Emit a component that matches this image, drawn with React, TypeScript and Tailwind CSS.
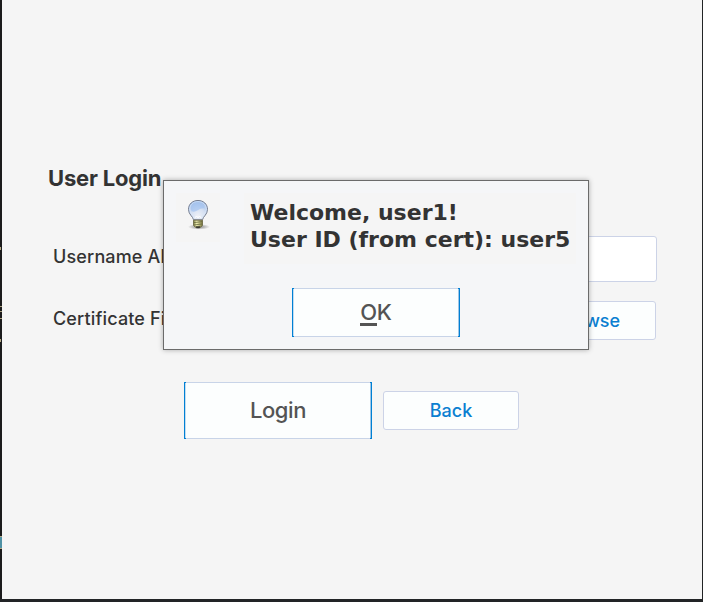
import React from 'react';

const inter = "font-['Inter','Liberation_Sans',sans-serif]";

function Bulb() {
  return (
    <svg width="26" height="32" viewBox="0 0 26 34" preserveAspectRatio="none" className="block">
      <defs>
        <radialGradient id="glass" cx="0.5" cy="0.8" r="0.85">
          <stop offset="0" stopColor="#eef1f8" />
          <stop offset="0.45" stopColor="#d5e0f2" />
          <stop offset="1" stopColor="#8db2e6" />
        </radialGradient>
        <radialGradient id="shade">
          <stop offset="0" stopColor="#333" stopOpacity="0.6" />
          <stop offset="1" stopColor="#333" stopOpacity="0" />
        </radialGradient>
        <linearGradient id="brass" x1="0" x2="1" y1="0" y2="0">
          <stop offset="0" stopColor="#77783c" />
          <stop offset="0.35" stopColor="#f3f3b5" />
          <stop offset="1" stopColor="#77753b" />
        </linearGradient>
      </defs>
      <ellipse cx="14" cy="28.500" rx="11" ry="3" fill="url(#shade)" />
      <path d="M8.500 21C8 17.500 3.500 15.500 3.500 10C3.500 4.300 7.600 0.500 13 0.500S22.500 4.300 22.500 10C22.500 15.500 18 17.500 17.500 21Z" fill="url(#glass)" stroke="#747b8c" />
      <path d="M9.500 20C9.500 16.500 4.700 15 4.700 10C4.700 5 8.200 1.700 13 1.700S21.300 5 21.300 10C21.300 15 16.500 16.500 16.500 20" fill="none" stroke="#dce9fb" strokeWidth="0.7" />
      <path d="M6.500 12C4.500 6 8 3 13 3C16.500 3 19.500 5.500 19.500 9C14 8 12 14 6.500 12Z" fill="#a4c3f0" opacity="0.7" />
      <path d="M10 19L11.500 17L13 19L14.500 17L16 19" fill="none" stroke="#fff" />
      <path d="M8.500 21.500H17.500V27L15.500 29H10.500L8.500 27Z" fill="url(#brass)" stroke="#626039" strokeWidth="0.8" />
      <path d="M9 24L17 23M9 26.500L17 25.500" stroke="#62643c" strokeWidth="0.8" />
      <path d="M10.500 28H15.500L14.500 30H11.500Z" fill="#38382f" />
    </svg>
  );
}

/* Primary button: pale top and bottom edges, blue sides with square corners. */
function PrimaryButton({ className, children }: { className: string; children: React.ReactNode }) {
  return (
    <button className={`relative flex shrink-0 items-center justify-center border-y border-y-[#c8d4e8] bg-[#fcfefe] text-[#545454] ${className}`}>
      <span className="absolute -inset-y-px left-0 w-px bg-[#0080d4]" />
      <span className="absolute inset-y-0 left-px w-px bg-[#c3ddf1]" />
      <span className="absolute -inset-y-px right-0 w-px bg-[#0080d4]" />
      <span className="absolute inset-y-0 right-px w-px bg-[#9fc6e6]" />
      <span className="absolute -top-px left-0 h-px w-0.5 bg-[#0080d4]" />
      <span className="absolute -top-px right-0 h-px w-0.5 bg-[#0080d4]" />
      <span className="absolute -bottom-px left-0 h-px w-0.5 bg-[#0080d4]" />
      <span className="absolute -bottom-px right-0 h-px w-0.5 bg-[#0080d4]" />
      {children}
    </button>
  );
}

function MessageDialog() {
  return (
    <div className="absolute left-[163px] top-[180px] flex h-[170px] w-[426px] flex-col border border-[#6b6b6b] bg-[#f5f6f8] shadow-[0_0_5px_rgba(0,0,0,0.3)]">
      <div className="flex pt-3 pl-3">
        <div className="h-[49px] w-11 bg-[#f5f5f5] pt-[7px] pl-[9px]">
          <Bulb />
        </div>
        <div className="ml-6 h-[71px] w-[332px] whitespace-nowrap bg-[#f5f5f5] pt-1.5 pl-1.5 font-['DejaVu_Sans',sans-serif] text-[22px] leading-[27px] font-bold text-[#333]">
          Welcome, user1!
          <br />
          User ID (from cert): user5
        </div>
      </div>
      <PrimaryButton className="mt-6 ml-32 h-[49px] w-[168px] text-[22px] font-medium tracking-[-0.2px]">
        <span>
          <span className="relative">
            O
            <span className="absolute -bottom-px left-0 h-[3px] w-[17px] bg-[#545454]" />
          </span>
          K
        </span>
      </PrimaryButton>
    </div>
  );
}

export default function App() {
  return (
    <div className={`relative flex h-[602px] w-[703px] overflow-hidden bg-[#222426] pr-px pb-[3px] ${inter}`}>
      <div className="w-0.5 shrink-0 bg-[#1b1b1c]">
        <div className="mt-[247px] h-[3px] w-px bg-[#b5aa87]" />
        <div className="mt-14 h-px w-0.5 bg-[#a99f7d]" />
        <div className="mt-1 h-px w-0.5 bg-[#a99f7d]" />
        <div className="mt-[6px] h-px w-0.5 bg-[#a99f7d]" />
        <div className="mt-5 h-[3px] w-px bg-[#b5aa87]" />
        <div className="mt-[194px] h-[13px] w-0.5 border-y border-[#b5aa87] bg-[#4f91a4]" />
      </div>
      <main className="flex flex-1 flex-col bg-[#f5f5f5] text-[#333]">
        <h1 className="mt-[163px] ml-[46px] text-[22px] leading-[30px] font-bold tracking-[-0.18px]">User Login</h1>
        <div className="mt-[43px] mr-[45px] ml-[51px] flex h-[46px] items-center justify-between">
          <label className="pb-1 text-[18px] leading-6 font-medium tracking-[0.15px]">Username Alias:</label>
          <input className="h-[46px] w-[430px] rounded-[3px] border border-[#ccd3e7] bg-white" />
        </div>
        <div className="mt-[19px] mr-[46px] ml-[51px] flex h-[39px] items-center justify-between">
          <label className="pb-1 text-[18px] leading-6 font-medium tracking-[0.15px]">Certificate File:</label>
          <button className="h-[39px] w-[136px] rounded-[3px] border border-[#ccd3e7] bg-[#fcfefe] text-[18px] font-medium text-[#0b7fd1]">Browse</button>
        </div>
        <div className="mt-[42px] ml-[182px] flex items-center gap-[11px]">
          <PrimaryButton className="h-[57px] w-[188px] text-[22px] font-medium tracking-[-0.4px]">Login</PrimaryButton>
          <button className="h-[39px] w-[136px] rounded-[3px] border border-[#ccd3e7] bg-[#fcfefe] text-[18px] font-medium text-[#0b7fd1]">Back</button>
        </div>
      </main>
      <MessageDialog />
    </div>
  );
}
